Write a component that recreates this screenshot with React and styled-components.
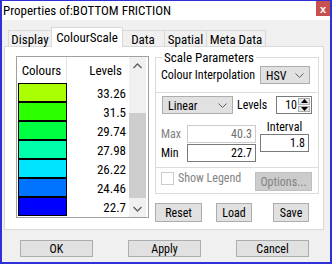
import React from 'react'
import styled, { createGlobalStyle } from 'styled-components'

const GlobalStyle = createGlobalStyle`
  html, body {
    margin: 0;
    padding: 0;
    background: #f0f0f0;
  }
  body {
    font-family: "Roboto Condensed", "Liberation Sans Narrow", "Liberation Sans", Arial, sans-serif;
    font-size: 12px;
    color: #000;
  }
  * {
    box-sizing: border-box;
  }
`

const levels = [
    { value: '33.26', color: '#aaff00' },
    { value: '31.5', color: '#2bff00' },
    { value: '29.74', color: '#00ff40' },
    { value: '27.98', color: '#00ffaa' },
    { value: '26.22', color: '#00e5ff' },
    { value: '24.46', color: '#0073ff' },
    { value: '22.7', color: '#0000ff' },
]

const tabs = [
    { label: 'Display', width: 44 },
    { label: 'ColourScale', width: 72, active: true },
    { label: 'Data', width: 44 },
    { label: 'Spatial', width: 43 },
    { label: 'Meta Data', width: 60 },
]

const Chevron = ({ up }) => (
    <svg width="9" height="6" viewBox="0 0 9 6">
        <polyline
            points={up ? '0.5,5 4.5,1 8.5,5' : '0.5,1 4.5,5 8.5,1'}
            fill="none"
            stroke="#606060"
            strokeWidth="1.4"
        />
    </svg>
)

const ComboArrow = () => (
    <svg width="9" height="5" viewBox="0 0 9 5">
        <polyline points="0.5,0.5 4.5,4.5 8.5,0.5" fill="none" stroke="#606060" strokeWidth="1" />
    </svg>
)

const Triangle = ({ up }) => (
    <svg width="7" height="4" viewBox="0 0 7 4">
        <polygon points={up ? '0,4 3.5,0 7,4' : '0,0 3.5,4 7,0'} fill="#000" />
    </svg>
)

const App = () => {
    return (
        <>
            <GlobalStyle />
            <Window>
                <TitleBar>
                    <Title>Properties of:BOTTOM FRICTION</Title>
                    <CloseButton>x</CloseButton>
                </TitleBar>
                <Body>
                    <TabRow>
                        {tabs.map((t) => (
                            <Tab key={t.label} $w={t.width} $active={t.active}>
                                {t.label}
                            </Tab>
                        ))}
                    </TabRow>
                    <Panel>
                        <ListBox>
                            <ListMain>
                                <ListHeader>
                                    <HeadColours>Colours</HeadColours>
                                    <HeadLevels>Levels</HeadLevels>
                                </ListHeader>
                                {levels.map((l) => (
                                    <ListRow key={l.value}>
                                        <Swatch $color={l.color} />
                                        <LevelValue>{l.value}</LevelValue>
                                    </ListRow>
                                ))}
                            </ListMain>
                            <ScrollBar>
                                <ScrollArrow>
                                    <Chevron up />
                                </ScrollArrow>
                                <ScrollTrack>
                                    <ScrollThumb />
                                </ScrollTrack>
                                <ScrollArrow>
                                    <Chevron />
                                </ScrollArrow>
                            </ScrollBar>
                        </ListBox>

                        <RightColumn>
                            <GroupBox>
                                <Legend>Scale Parameters</Legend>
                                <InterpRow>
                                    <span>Colour Interpolation</span>
                                    <Combo $w={50}>
                                        <span>HSV</span>
                                        <ComboArrow />
                                    </Combo>
                                </InterpRow>
                                <Section>
                                    <LinearRow>
                                        <Combo $w={71}>
                                            <span>Linear</span>
                                            <ComboArrow />
                                        </Combo>
                                        <LevelsLabel>Levels</LevelsLabel>
                                        <Spinner>
                                            <SpinValue>10</SpinValue>
                                            <SpinButtons>
                                                <SpinButton>
                                                    <Triangle up />
                                                </SpinButton>
                                                <SpinButton>
                                                    <Triangle />
                                                </SpinButton>
                                            </SpinButtons>
                                        </Spinner>
                                    </LinearRow>
                                    <ValuesArea>
                                        <RangeColumn>
                                            <FieldRow>
                                                <FieldLabel $disabled>Max</FieldLabel>
                                                <TextBox $w={69} $disabled>
                                                    40.3
                                                </TextBox>
                                            </FieldRow>
                                            <FieldRow>
                                                <FieldLabel>Min</FieldLabel>
                                                <TextBox $w={69}>22.7</TextBox>
                                            </FieldRow>
                                        </RangeColumn>
                                        <IntervalColumn>
                                            <IntervalLabel>Interval</IntervalLabel>
                                            <TextBox $w={49}>1.8</TextBox>
                                        </IntervalColumn>
                                    </ValuesArea>
                                </Section>
                                <LegendRow>
                                    <CheckBox />
                                    <CheckLabel>Show Legend</CheckLabel>
                                    <Button $w={57} $h={19} $disabled>
                                        Options...
                                    </Button>
                                </LegendRow>
                            </GroupBox>
                            <ActionRow>
                                <Button $w={47}>Reset</Button>
                                <Button $w={36} $ml={14}>
                                    Load
                                </Button>
                                <Button $w={36} $ml={21}>
                                    Save
                                </Button>
                            </ActionRow>
                        </RightColumn>
                    </Panel>
                    <Footer>
                        <Button $w={73} $h={17}>
                            OK
                        </Button>
                        <Button $w={73} $h={17}>
                            Apply
                        </Button>
                        <Button $w={73} $h={17}>
                            Cancel
                        </Button>
                    </Footer>
                </Body>
            </Window>
        </>
    )
}

export default App

const Window = styled.div`
    width: 332px;
    height: 264px;
    display: flex;
    flex-direction: column;
    border: 2px solid #3030d8;
    border-top-width: 1px;
    background: #f0f0f0;
`

const TitleBar = styled.div`
    height: 19px;
    background: #fff;
    display: flex;
    align-items: flex-start;
`

const Title = styled.div`
    padding: 2px 0 0 1px;
    font-size: 13px;
    line-height: 15px;
    white-space: nowrap;
`

const CloseButton = styled.div`
    margin-left: auto;
    width: 14px;
    height: 15px;
    background: #c75050;
    color: #fff;
    font: bold 11px 'Liberation Sans', Arial, sans-serif;
    display: flex;
    align-items: center;
    justify-content: center;
`

const Body = styled.div`
    flex: 1;
    display: flex;
    flex-direction: column;
    padding-top: 7px;
`

const TabRow = styled.div`
    display: flex;
    align-items: flex-end;
    height: 20px;
    margin-bottom: -1px;
    padding-left: 7px;
    position: relative;
    z-index: 1;
`

const Tab = styled.div`
    width: ${(p) => p.$w}px;
    height: ${(p) => (p.$active ? 20 : 17)}px;
    margin-left: -1px;
    margin-right: ${(p) => (p.$active ? -1 : 0)}px;
    border: 1px solid #d9d9d9;
    border-bottom: ${(p) => (p.$active ? 'none' : '1px solid #d9d9d9')};
    background: ${(p) => (p.$active ? '#fff' : '#f0f0f0')};
    display: flex;
    align-items: center;
    justify-content: center;
    padding-top: ${(p) => (p.$active ? 0 : 1)}px;
    font-size: 13px;
    white-space: nowrap;
    position: relative;
    z-index: ${(p) => (p.$active ? 2 : 1)};
`

const Panel = styled.div`
    margin-left: 2px;
    width: 320px;
    height: 184px;
    background: #fff;
    border: 1px solid #d9d9d9;
    display: flex;
    align-items: flex-start;
    padding: 4px 4px 0 11px;
`

const ListBox = styled.div`
    margin-top: 5px;
    width: 133px;
    height: 162px;
    border: 1px solid #a0a0a0;
    display: flex;
    font-size: 13px;
`

const ListMain = styled.div`
    flex: 1;
    display: flex;
    flex-direction: column;
`

const ListHeader = styled.div`
    height: 26px;
    display: flex;
    align-items: center;
`

const HeadColours = styled.div`
    width: 50px;
    height: 100%;
    display: flex;
    align-items: center;
    justify-content: center;
    border-right: 1px solid #e5e5e5;
`

const HeadLevels = styled.div`
    flex: 1;
    text-align: right;
    padding-right: 7px;
`

const ListRow = styled.div`
    height: 19px;
    display: flex;
    align-items: center;
`

const Swatch = styled.div`
    margin-left: 1px;
    width: 49px;
    height: 19px;
    border: 1px solid #000;
    background: ${(p) => p.$color};
`

const LevelValue = styled.div`
    flex: 1;
    text-align: right;
    padding-right: 3px;
    padding-top: 2px;
`

const ScrollBar = styled.div`
    width: 17px;
    margin-right: 2px;
    background: #f0f0f0;
    display: flex;
    flex-direction: column;
`

const ScrollArrow = styled.div`
    height: 17px;
    display: flex;
    align-items: center;
    justify-content: center;
`

const ScrollTrack = styled.div`
    flex: 1;
    padding: 39px 0 0;
`

const ScrollThumb = styled.div`
    width: 100%;
    height: 85px;
    background: #cdcdcd;
`

const RightColumn = styled.div`
    margin-left: 6px;
    width: 164px;
    display: flex;
    flex-direction: column;
`

const GroupBox = styled.fieldset`
    margin: 0;
    padding: 0;
    border: 1px solid #dcdcdc;
    min-width: 0;
`

const Legend = styled.legend`
    margin-left: 6px;
    padding: 0 2px;
    line-height: 13px;
    font-size: 13px;
`

const InterpRow = styled.div`
    height: 22px;
    display: flex;
    align-items: center;
    justify-content: space-between;
    padding: 0 8px 0 5px;
    white-space: nowrap;
`

const Combo = styled.div`
    width: ${(p) => p.$w}px;
    height: 18px;
    background: #e1e1e1;
    border: 1px solid #adadad;
    display: flex;
    align-items: center;
    justify-content: space-between;
    padding: 1px 5px 0 5px;
`

const Section = styled.div`
    margin-top: 6px;
    border-top: 1px solid #dcdcdc;
    border-bottom: 1px solid #dcdcdc;
    padding: 3px 6px 5px 6px;
`

const LinearRow = styled.div`
    height: 18px;
    display: flex;
    align-items: center;
`

const LevelsLabel = styled.span`
    margin-left: 4px;
`

const Spinner = styled.div`
    margin-left: auto;
    width: 36px;
    height: 18px;
    border: 1px solid #7a7a7a;
    display: flex;
    align-items: stretch;
`

const SpinValue = styled.div`
    flex: 1;
    text-align: right;
    padding: 1px 1px 0 0;
`

const SpinButtons = styled.div`
    width: 13px;
    display: flex;
    flex-direction: column;
    gap: 1px;
    padding: 1px 1px 1px 0;
`

const SpinButton = styled.div`
    flex: 1;
    background: #e5e5e5;
    border: 1px solid #adadad;
    display: flex;
    align-items: center;
    justify-content: center;
`

const ValuesArea = styled.div`
    margin-top: 6px;
    display: flex;
    align-items: flex-start;
`

const RangeColumn = styled.div`
    padding-top: 5px;
    display: flex;
    flex-direction: column;
    gap: 1px;
`

const FieldRow = styled.div`
    display: flex;
    align-items: center;
`

const FieldLabel = styled.span`
    width: 26px;
    margin-left: -1px;
    color: ${(p) => (p.$disabled ? '#838383' : '#000')};
`

const TextBox = styled.div`
    width: ${(p) => p.$w}px;
    height: 18px;
    border: 1px solid ${(p) => (p.$disabled ? '#cccccc' : '#7a7a7a')};
    color: ${(p) => (p.$disabled ? '#6d6d6d' : '#000')};
    background: #fff;
    text-align: right;
    padding: 1px 3px 0 0;
    line-height: 15px;
`

const IntervalColumn = styled.div`
    margin-left: 4px;
    display: flex;
    flex-direction: column;
    align-items: center;
`

const IntervalLabel = styled.div`
    height: 14px;
    line-height: 14px;
`

const LegendRow = styled.div`
    height: 25px;
    display: flex;
    align-items: flex-start;
    padding: 4px 6px 0 5px;
`

const CheckBox = styled.div`
    width: 13px;
    height: 13px;
    border: 1px solid #cccccc;
    background: #fff;
`

const CheckLabel = styled.span`
    margin-left: 4px;
    color: #838383;
    line-height: 13px;
    white-space: nowrap;
`

const Button = styled.div`
    width: ${(p) => p.$w}px;
    height: ${(p) => p.$h || 19}px;
    margin-left: ${(p) => (p.$ml !== undefined ? `${p.$ml}px` : p.$disabled ? 'auto' : '0')};
    background: ${(p) => (p.$disabled ? '#cccccc' : '#e1e1e1')};
    border: 1px solid ${(p) => (p.$disabled ? '#bfbfbf' : '#adadad')};
    color: ${(p) => (p.$disabled ? '#838383' : '#000')};
    display: flex;
    align-items: center;
    justify-content: center;
    white-space: nowrap;
`

const ActionRow = styled.div`
    margin-top: 9px;
    display: flex;
`

const Footer = styled.div`
    margin-top: 10px;
    display: flex;
    gap: 35px;
    padding-left: 18px;
`
